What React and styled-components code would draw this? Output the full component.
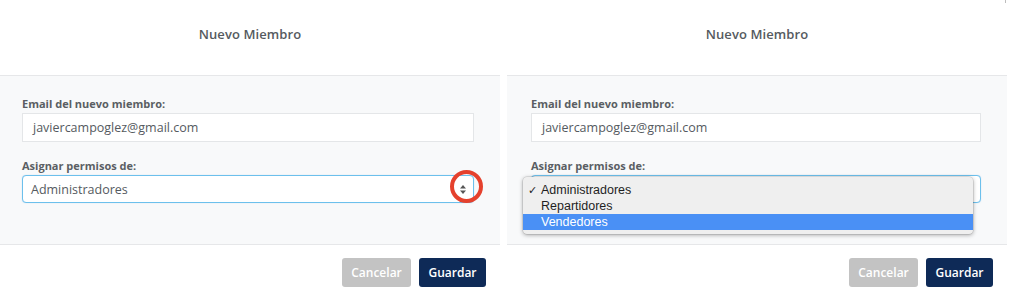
import React from "react";
import styled, { createGlobalStyle } from "styled-components";

const Global = createGlobalStyle`
  html, body { margin: 0; padding: 0; background: #ffffff; }
  body { font-family: "Open Sans", "Noto Sans", sans-serif; }
  * { box-sizing: border-box; }
`;

const Page = styled.div`
  display: flex;
  gap: 7px;
  width: 1011px;
  height: 297px;
  overflow: hidden;
  position: relative;
`;

const Panel = styled.section`
  width: 500px;
  flex: none;
  display: flex;
  flex-direction: column;
`;

const Header = styled.header`
  height: 76px;
  border-bottom: 1px solid #e6e7e9;
  display: flex;
  align-items: center;
  justify-content: center;
  padding-bottom: 8px;
  padding-left: ${(p) => p.$shift || 0}px;
`;

const Title = styled.h2`
  margin: 0;
  font-size: 13px;
  font-weight: 600;
  color: #555a60;
  letter-spacing: 0.1px;
`;

const Body = styled.div`
  background: #f8f9fa;
  height: 168px;
  padding: 20px 26px 0 ${(p) => p.$padLeft}px;
  display: flex;
  flex-direction: column;
`;

const Label = styled.label`
  font-size: 11px;
  font-weight: 700;
  color: #5a5e63;
  line-height: 15px;
  margin-bottom: 2px;
  margin-top: ${(p) => p.$top || 0}px;
`;

const TextInput = styled.div`
  height: 29px;
  background: #fff;
  border: 1px solid #e4e6e8;
  display: flex;
  align-items: center;
  padding-left: 10px;
  font-size: 12.5px;
  color: #555a60;
`;

const SelectWrap = styled.div`
  position: relative;
`;

const SelectBox = styled.div`
  height: 28px;
  background: #fff;
  border: 1px solid #6cc0ec;
  border-radius: 4px;
  box-shadow: 0 0 1px rgba(102, 175, 233, 0.5);
  display: flex;
  align-items: center;
  justify-content: space-between;
  padding: 0 6px 0 8px;
  font-size: 12.5px;
  color: #555a60;
`;

const SelectText = styled.span`
  visibility: ${(p) => (p.$hidden ? "hidden" : "visible")};
`;

const Ring = styled.div`
  position: absolute;
  right: -9px;
  top: -5px;
  width: 33px;
  height: 33px;
  border: 4px solid #e5412d;
  border-radius: 50%;
`;

const Menu = styled.ul`
  position: absolute;
  left: -8px;
  top: 2px;
  width: 450px;
  margin: 0;
  padding: 5px 0 4px;
  list-style: none;
  background: #efefef;
  border-radius: 4px;
  box-shadow: 0 1px 4px rgba(0, 0, 0, 0.35), 0 0 0 0.5px rgba(0, 0, 0, 0.15);
  font-family: "Liberation Sans", Arial, sans-serif;
  font-size: 12.5px;
  color: #1f1f1f;
`;

const Item = styled.li`
  position: relative;
  height: 16px;
  line-height: 16px;
  padding-left: 18px;
  background: ${(p) => (p.$active ? "#4a90f5" : "transparent")};
  color: ${(p) => (p.$active ? "#fff" : "#1f1f1f")};
`;

const Check = styled.span`
  position: absolute;
  left: 5px;
  top: 0;
  font-size: 11px;
`;

const Footer = styled.footer`
  flex: 1;
  border-top: 1px solid #e6e7e9;
  display: flex;
  justify-content: flex-end;
  gap: 8px;
  padding: 13px ${(p) => p.$padRight}px 0 0;
`;

const Button = styled.button`
  height: 29px;
  padding: 0;
  width: ${(p) => p.$w}px;
  border: none;
  border-radius: 3px;
  background: ${(p) => (p.$primary ? "#0e2a57" : "#c3c3c3")};
  color: #fff;
  font-family: "Open Sans", sans-serif;
  font-size: 12px;
  font-weight: 600;
`;

const Corner = styled.div`
  position: absolute;
  right: 5px;
  top: 0;
  width: 1px;
  height: 3px;
  background: #bdbdbd;
`;

const Arrows = () => (
  <svg width="8" height="11" viewBox="0 0 8 11">
    <path d="M4 1 L7 4.5 H1 Z" fill="#555" />
    <path d="M4 10 L7 6.5 H1 Z" fill="#555" />
  </svg>
);

function MemberForm({ open, padLeft, shift, padRight }) {
  return (
    <Panel>
      <Header $shift={shift}>
        <Title>Nuevo Miembro</Title>
      </Header>
      <Body $padLeft={padLeft}>
        <Label>Email del nuevo miembro:</Label>
        <TextInput>javiercampoglez@gmail.com</TextInput>
        <Label $top={16}>Asignar permisos de:</Label>
        <SelectWrap>
          <SelectBox>
            <SelectText $hidden={open}>Administradores</SelectText>
            <Arrows />
          </SelectBox>
          {!open && <Ring />}
          {open && (
            <Menu>
              <Item>
                <Check>✓</Check>Administradores
              </Item>
              <Item>Repartidores</Item>
              <Item $active>Vendedores</Item>
            </Menu>
          )}
        </SelectWrap>
      </Body>
      <Footer $padRight={padRight}>
        <Button $w={69}>Cancelar</Button>
        <Button $w={67} $primary>
          Guardar
        </Button>
      </Footer>
    </Panel>
  );
}

export default function App() {
  return (
    <>
      <Global />
      <Page>
        <MemberForm padLeft={22} shift={-6} padRight={14} />
        <MemberForm open padLeft={24} shift={0} padRight={14} />
        <Corner />
      </Page>
    </>
  );
}
